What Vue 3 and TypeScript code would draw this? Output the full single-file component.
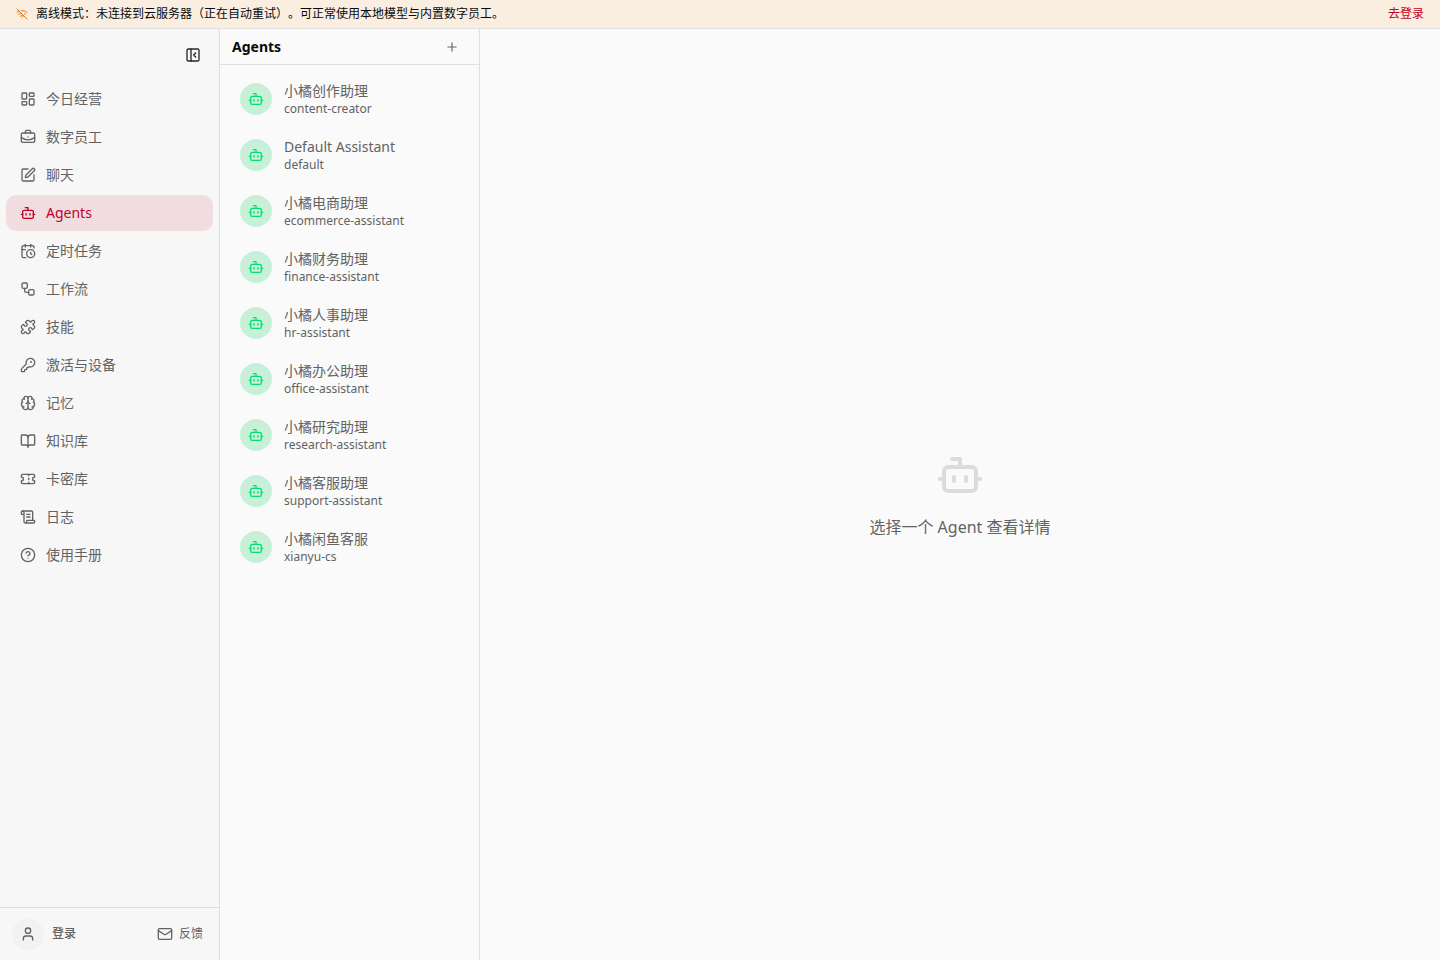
<script setup lang="ts">
import { ref } from 'vue'

const icons: Record<string, string[]> = {
  wifiOff: ['M12 20h.01', 'M8.5 16.429a5 5 0 0 1 7 0', 'M5 12.859a10 10 0 0 1 5.17-2.69', 'M19 12.859a10 10 0 0 0-2.007-1.523', 'M2 8.82a15 15 0 0 1 4.177-2.643', 'M22 8.82a15 15 0 0 0-11.288-3.764', 'm2 2 20 20'],
  panel: ['M5 3h14a2 2 0 0 1 2 2v14a2 2 0 0 1-2 2H5a2 2 0 0 1-2-2V5a2 2 0 0 1 2-2z', 'M9 3v18', 'm16 15-3-3 3-3'],
  dashboard: ['M4 3h5a1 1 0 0 1 1 1v7a1 1 0 0 1-1 1H4a1 1 0 0 1-1-1V4a1 1 0 0 1 1-1z', 'M15 3h5a1 1 0 0 1 1 1v3a1 1 0 0 1-1 1h-5a1 1 0 0 1-1-1V4a1 1 0 0 1 1-1z', 'M15 12h5a1 1 0 0 1 1 1v7a1 1 0 0 1-1 1h-5a1 1 0 0 1-1-1v-7a1 1 0 0 1 1-1z', 'M4 16h5a1 1 0 0 1 1 1v3a1 1 0 0 1-1 1H4a1 1 0 0 1-1-1v-3a1 1 0 0 1 1-1z'],
  briefcase: ['M12 12h.01', 'M16 6V4a2 2 0 0 0-2-2h-4a2 2 0 0 0-2 2v2', 'M22 13a18.15 18.15 0 0 1-20 0', 'M4 6h16a2 2 0 0 1 2 2v10a2 2 0 0 1-2 2H4a2 2 0 0 1-2-2V8a2 2 0 0 1 2-2z'],
  pen: ['M12 3H5a2 2 0 0 0-2 2v14a2 2 0 0 0 2 2h14a2 2 0 0 0 2-2v-7', 'M18.375 2.625a1 1 0 0 1 3 3l-9.013 9.014a2 2 0 0 1-.853.505l-2.873.84a.5.5 0 0 1-.62-.62l.84-2.873a2 2 0 0 1 .506-.852z'],
  bot: ['M12 8V4H8', 'M6 8h12a2 2 0 0 1 2 2v8a2 2 0 0 1-2 2H6a2 2 0 0 1-2-2v-8a2 2 0 0 1 2-2z', 'M2 14h2', 'M20 14h2', 'M15 13v2', 'M9 13v2'],
  calendar: ['M21 7.5V6a2 2 0 0 0-2-2H5a2 2 0 0 0-2 2v14a2 2 0 0 0 2 2h3.5', 'M16 2v4', 'M8 2v4', 'M3 10h5', 'M16 14v2.2l1.6 1', 'M22 16a6 6 0 1 1-12 0 6 6 0 0 1 12 0z'],
  workflow: ['M5 3h4a2 2 0 0 1 2 2v4a2 2 0 0 1-2 2H5a2 2 0 0 1-2-2V5a2 2 0 0 1 2-2z', 'M7 11v4a2 2 0 0 0 2 2h4', 'M15 13h4a2 2 0 0 1 2 2v4a2 2 0 0 1-2 2h-4a2 2 0 0 1-2-2v-4a2 2 0 0 1 2-2z'],
  puzzle: ['M15.39 4.39a1 1 0 0 0 1.68-.474 2.5 2.5 0 1 1 3.014 3.015 1 1 0 0 0-.474 1.68l1.683 1.682a2.414 2.414 0 0 1 0 3.414L19.61 15.39a1 1 0 0 1-1.68-.474 2.5 2.5 0 1 0-3.014 3.015 1 1 0 0 1 .474 1.68l-1.683 1.682a2.414 2.414 0 0 1-3.414 0L8.61 19.61a1 1 0 0 0-1.68.474 2.5 2.5 0 1 1-3.014-3.015 1 1 0 0 0 .474-1.68l-1.683-1.682a2.414 2.414 0 0 1 0-3.414L4.39 8.61a1 1 0 0 1 1.68.474 2.5 2.5 0 1 0 3.014-3.015 1 1 0 0 1-.474-1.68l1.683-1.682a2.414 2.414 0 0 1 3.414 0z'],
  key: ['M2.586 17.414A2 2 0 0 0 2 18.828V21a1 1 0 0 0 1 1h3a1 1 0 0 0 1-1v-1a1 1 0 0 1 1-1h1a1 1 0 0 0 1-1v-1a1 1 0 0 1 1-1h.172a2 2 0 0 0 1.414-.586l.814-.814a6.5 6.5 0 1 0-4-4z', 'M17 7.5a.5.5 0 1 1-1 0 .5.5 0 0 1 1 0z'],
  brain: ['M12 18V5', 'M15 13a4.17 4.17 0 0 1-3-4 4.17 4.17 0 0 1-3 4', 'M17.598 6.5A3 3 0 1 0 12 5a3 3 0 1 0-5.598 1.5', 'M17.997 5.125a4 4 0 0 1 2.526 5.77', 'M18 18a4 4 0 0 0 2-7.464', 'M19.967 17.483A4 4 0 1 1 12 18a4 4 0 1 1-7.967-.517', 'M6 18a4 4 0 0 1-2-7.464', 'M6.003 5.125a4 4 0 0 0-2.526 5.77'],
  book: ['M12 7v14', 'M3 18a1 1 0 0 1-1-1V4a1 1 0 0 1 1-1h5a4 4 0 0 1 4 4 4 4 0 0 1 4-4h5a1 1 0 0 1 1 1v13a1 1 0 0 1-1 1h-6a3 3 0 0 0-3 3 3 3 0 0 0-3-3z'],
  ticket: ['M2 9a3 3 0 0 1 0 6v2a2 2 0 0 0 2 2h16a2 2 0 0 0 2-2v-2a3 3 0 0 1 0-6V7a2 2 0 0 0-2-2H4a2 2 0 0 0-2 2Z', 'M13 5v2', 'M13 17v2', 'M13 11v2'],
  scroll: ['M15 12h-5', 'M15 8h-5', 'M19 17V5a2 2 0 0 0-2-2H4', 'M8 21h12a2 2 0 0 0 2-2v-1a1 1 0 0 0-1-1H11a1 1 0 0 0-1 1v1a2 2 0 1 1-4 0V5a2 2 0 1 0-4 0v2a1 1 0 0 0 1 1h3'],
  help: ['M22 12a10 10 0 1 1-20 0 10 10 0 0 1 20 0z', 'M9.09 9a3 3 0 0 1 5.83 1c0 2-3 3-3 3', 'M12 17h.01'],
  user: ['M19 21v-2a4 4 0 0 0-4-4H9a4 4 0 0 0-4 4v2', 'M16 7a4 4 0 1 1-8 0 4 4 0 0 1 8 0z'],
  mail: ['M4 4h16a2 2 0 0 1 2 2v12a2 2 0 0 1-2 2H4a2 2 0 0 1-2-2V6a2 2 0 0 1 2-2z', 'm22 7-8.97 5.7a1.94 1.94 0 0 1-2.06 0L2 7'],
  plus: ['M5 12h14', 'M12 5v14'],
}

const nav = [
  { icon: 'dashboard', label: '今日经营' },
  { icon: 'briefcase', label: '数字员工' },
  { icon: 'pen', label: '聊天' },
  { icon: 'bot', label: 'Agents' },
  { icon: 'calendar', label: '定时任务' },
  { icon: 'workflow', label: '工作流' },
  { icon: 'puzzle', label: '技能' },
  { icon: 'key', label: '激活与设备' },
  { icon: 'brain', label: '记忆' },
  { icon: 'book', label: '知识库' },
  { icon: 'ticket', label: '卡密库' },
  { icon: 'scroll', label: '日志' },
  { icon: 'help', label: '使用手册' },
]
const active = ref('Agents')

const agents = [
  { name: '小橘创作助理', id: 'content-creator' },
  { name: 'Default Assistant', id: 'default' },
  { name: '小橘电商助理', id: 'ecommerce-assistant' },
  { name: '小橘财务助理', id: 'finance-assistant' },
  { name: '小橘人事助理', id: 'hr-assistant' },
  { name: '小橘办公助理', id: 'office-assistant' },
  { name: '小橘研究助理', id: 'research-assistant' },
  { name: '小橘客服助理', id: 'support-assistant' },
  { name: '小橘闲鱼客服', id: 'xianyu-cs' },
]
</script>

<template>
  <div class="app">
    <div class="banner" role="status">
      <svg class="icon icon-xs warn" viewBox="0 0 24 24"><path v-for="d in icons.wifiOff" :key="d" :d="d" /></svg>
      <span class="banner-text">离线模式：未连接到云服务器（正在自动重试）。可正常使用本地模型与内置数字员工。</span>
      <a class="banner-link" href="#login">去登录</a>
    </div>
    <div class="body">
      <aside class="sidebar">
        <div class="sidebar-top">
          <button class="icon-button dark" type="button" aria-label="收起侧栏">
            <svg class="icon" viewBox="0 0 24 24"><path v-for="d in icons.panel" :key="d" :d="d" /></svg>
          </button>
        </div>
        <nav class="nav">
          <button
            v-for="item in nav"
            :key="item.label"
            type="button"
            class="nav-item"
            :class="{ active: active === item.label }"
            @click="active = item.label"
          >
            <svg class="icon" viewBox="0 0 24 24"><path v-for="d in icons[item.icon]" :key="d" :d="d" /></svg>
            <span>{{ item.label }}</span>
          </button>
        </nav>
        <div class="sidebar-foot">
          <button class="account" type="button">
            <span class="avatar"><svg class="icon" viewBox="0 0 24 24"><path v-for="d in icons.user" :key="d" :d="d" /></svg></span>
            <span>登录</span>
          </button>
          <button class="feedback" type="button">
            <svg class="icon" viewBox="0 0 24 24"><path v-for="d in icons.mail" :key="d" :d="d" /></svg>
            <span>反馈</span>
          </button>
        </div>
      </aside>
      <section class="list-pane">
        <header class="list-head">
          <h1>Agents</h1>
          <button class="icon-button" type="button" aria-label="新建 Agent">
            <svg class="icon icon-sm" viewBox="0 0 24 24"><path v-for="d in icons.plus" :key="d" :d="d" /></svg>
          </button>
        </header>
        <div class="agents">
          <button v-for="agent in agents" :key="agent.id" type="button" class="agent">
            <span class="agent-avatar"><svg class="icon" viewBox="0 0 24 24"><path v-for="d in icons.bot" :key="d" :d="d" /></svg></span>
            <span class="agent-text">
              <span class="agent-name">{{ agent.name }}</span>
              <span class="agent-id">{{ agent.id }}</span>
            </span>
          </button>
        </div>
      </section>
      <main class="detail">
        <svg class="icon icon-lg" viewBox="0 0 24 24"><path v-for="d in icons.bot" :key="d" :d="d" /></svg>
        <p>选择一个 Agent 查看详情</p>
      </main>
    </div>
  </div>
</template>

<style>
body {
  margin: 0;
}
</style>

<style scoped>
.app {
  display: flex;
  flex-direction: column;
  height: 100vh;
  background: #fafafa;
  color: #636363;
  font-family: "Noto Sans", "Noto Sans CJK SC", sans-serif;
  font-size: 14px;
  line-height: 20px;
}
button {
  padding: 0;
  border: 0;
  background: none;
  color: inherit;
  font: inherit;
  text-align: left;
  cursor: pointer;
}
.icon {
  display: block;
  flex: none;
  width: 16px;
  height: 16px;
  fill: none;
  stroke: currentColor;
  stroke-width: 2;
  stroke-linecap: round;
  stroke-linejoin: round;
}
.icon-xs {
  width: 12px;
  height: 12px;
}
.icon-sm {
  width: 14px;
  height: 14px;
}
.icon-lg {
  width: 48px;
  height: 48px;
  color: #dcdcdc;
}
.banner {
  display: flex;
  align-items: center;
  gap: 8px;
  padding: 6px 16px;
  border-bottom: 1px solid #e0e0e0;
  background: #f9eee0;
  color: #0a0a0a;
  font-size: 12px;
  line-height: 16px;
}
.warn {
  color: #e17b17;
}
.banner-text {
  flex: 1;
  text-spacing-trim: space-all;
}
.banner-link {
  color: #c10023;
  text-decoration: none;
}
.body {
  display: flex;
  flex: 1;
  min-height: 0;
}
.sidebar {
  display: flex;
  flex: none;
  flex-direction: column;
  box-sizing: border-box;
  width: 220px;
  border-right: 1px solid #e0e0e0;
  background: #f7f7f7;
}
.sidebar-top {
  display: flex;
  justify-content: flex-end;
  padding: 12px;
}
.icon-button {
  display: flex;
  align-items: center;
  justify-content: center;
  width: 28px;
  height: 28px;
}
.dark {
  color: #262626;
}
.nav {
  display: flex;
  flex: 1;
  flex-direction: column;
  gap: 2px;
  min-height: 0;
  padding: 0 6px;
}
.nav-item {
  display: flex;
  align-items: center;
  gap: 10px;
  padding: 8px 14px;
  border-radius: 10px;
}
.nav-item.active {
  background: #f1dde0;
  color: #c10023;
}
.sidebar-foot {
  display: flex;
  align-items: center;
  justify-content: space-between;
  padding: 10px 16px 10px 12px;
  border-top: 1px solid #e0e0e0;
  font-size: 12px;
  line-height: 16px;
}
.account {
  display: flex;
  align-items: center;
  gap: 8px;
  font-weight: 500;
}
.avatar {
  display: flex;
  align-items: center;
  justify-content: center;
  width: 32px;
  height: 32px;
  border-radius: 50%;
  background: #f2f2f2;
}
.feedback {
  display: flex;
  align-items: center;
  gap: 6px;
}
.list-pane {
  flex: none;
  box-sizing: border-box;
  width: 260px;
  border-right: 1px solid #e0e0e0;
}
.list-head {
  display: flex;
  align-items: center;
  justify-content: space-between;
  padding: 4px 13px 3px 12px;
  border-bottom: 1px solid #e0e0e0;
}
h1 {
  margin: 0;
  color: #0a0a0a;
  font-size: 14px;
  font-weight: 700;
  line-height: 20px;
}
.agents {
  display: flex;
  flex-direction: column;
  padding: 6px 8px;
}
.agent {
  display: flex;
  align-items: center;
  gap: 12px;
  padding: 10px 12px;
}
.agent-avatar {
  display: flex;
  align-items: center;
  justify-content: center;
  width: 32px;
  height: 32px;
  border-radius: 50%;
  background: #c8f0d9;
  color: #05df72;
}
.agent-text {
  display: flex;
  flex-direction: column;
}
.agent-name {
  line-height: 20px;
}
.agent-id {
  font-size: 12px;
  line-height: 16px;
}
.detail {
  display: flex;
  flex: 1;
  flex-direction: column;
  align-items: center;
  justify-content: center;
  gap: 16px;
  min-width: 0;
}
.detail p {
  margin: 0;
  font-size: 16px;
  line-height: 24px;
}
</style>
